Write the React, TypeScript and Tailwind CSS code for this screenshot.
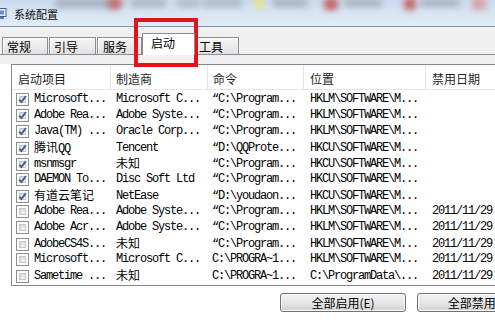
import type { ReactNode } from "react";

type Row = {
  on: boolean;
  name: string;
  maker: string;
  cmd: string;
  loc: string;
  date?: string;
};

const ROWS: Row[] = [
  { on: true, name: "Microsoft...", maker: "Microsoft C...", cmd: "“C:\\Program...", loc: "HKLM\\SOFTWARE\\M..." },
  { on: true, name: "Adobe Rea...", maker: "Adobe Syste...", cmd: "“C:\\Program...", loc: "HKLM\\SOFTWARE\\M..." },
  { on: true, name: "Java(TM) ...", maker: "Oracle Corp...", cmd: "“C:\\Program...", loc: "HKLM\\SOFTWARE\\M..." },
  { on: true, name: "腾讯QQ", maker: "Tencent", cmd: "“D:\\QQProte...", loc: "HKCU\\SOFTWARE\\M..." },
  { on: true, name: "msnmsgr", maker: "未知", cmd: "“C:\\Program...", loc: "HKCU\\SOFTWARE\\M..." },
  { on: true, name: "DAEMON To...", maker: "Disc Soft Ltd", cmd: "“C:\\Program...", loc: "HKCU\\SOFTWARE\\M..." },
  { on: true, name: "有道云笔记", maker: "NetEase", cmd: "“D:\\youdaon...", loc: "HKCU\\SOFTWARE\\M..." },
  { on: false, name: "Adobe Rea...", maker: "Adobe Syste...", cmd: "“C:\\Program...", loc: "HKLM\\SOFTWARE\\M...", date: "2011/11/29" },
  { on: false, name: "Adobe Acr...", maker: "Adobe Syste...", cmd: "“C:\\Program...", loc: "HKLM\\SOFTWARE\\M...", date: "2011/11/29" },
  { on: false, name: "AdobeCS4S...", maker: "未知", cmd: "“C:\\Program...", loc: "HKLM\\SOFTWARE\\M...", date: "2011/11/29" },
  { on: false, name: "Microsoft...", maker: "Microsoft C...", cmd: "C:\\PROGRA~1...", loc: "HKLM\\SOFTWARE\\M...", date: "2011/11/29" },
  { on: false, name: "Sametime ...", maker: "未知", cmd: "C:\\PROGRA~1...", loc: "C:\\ProgramData\\...", date: "2011/11/29" },
];

const TABS = [
  { label: "常规", cls: "ml-[2px] w-[46px] pl-[4px]" },
  { label: "引导", cls: "ml-[1px] w-[47px] pl-[4px]" },
  { label: "服务", cls: "ml-[1px] w-[45px] pl-[5px]" },
  { label: "启动", cls: "w-[53px] pl-[8px]", active: true },
  { label: "工具", cls: "w-[44px] pl-[3px]" },
];

// SimSun-like cells: latin in a 6px-advance mono, CJK runs at full 12px
function Txt({ s }: { s: string }) {
  const parts = s.split(/([\u3400-\u9fff]+)/);
  return (
    <>
      {parts.map((p, i) =>
        i % 2 === 1 ? (
          <span key={i} className="font-['Noto_Sans_CJK_SC',sans-serif] text-[12px] tracking-normal">
            {p}
          </span>
        ) : (
          <span key={i}>{p}</span>
        )
      )}
    </>
  );
}

function CheckBox({ checked }: { checked: boolean }) {
  return (
    <div className="relative h-[13px] w-[13px] shrink-0 border border-[#8e8f8f] bg-white p-[2px]">
      <div className="h-full w-full border border-[#c4c6ca] bg-linear-to-br from-[#d5d7db] to-[#f6f6f6]" />
      {checked && (
        <svg viewBox="0 0 11 11" className="absolute left-0 top-0 h-[11px] w-[11px]">
          <path d="M2.2 5.6 L4.4 8 L8.9 2.2" fill="none" stroke="#4b5c9c" strokeWidth="1.9" />
        </svg>
      )}
    </div>
  );
}

function TitleBar() {
  return (
    <div className="relative h-[27px] overflow-hidden border-b border-[#8494a8] bg-linear-to-b from-[#c9dbee] via-[#d8e5f3] to-[#e2ebf6]">
      <div className="absolute left-[55px] top-[-2px] h-[10px] w-[60px] rounded bg-[#a9b3c2] blur-[3px]" />
      <div className="absolute left-[108px] top-[-2px] h-[11px] w-[14px] rounded bg-[#c46a6a] blur-[3px]" />
      <div className="absolute left-[130px] top-[-1px] h-[8px] w-[36px] rounded bg-[#aab4c3] blur-[3px]" />
      <div className="absolute left-[176px] top-[-1px] h-[8px] w-[24px] rounded bg-[#b0b9c7] blur-[3px]" />
      <div className="absolute left-[202px] top-[-1px] h-[8px] w-[40px] rounded bg-[#acb6c4] blur-[3px]" />
      <div className="absolute left-[254px] top-[-2px] h-[10px] w-[10px] rounded bg-[#ece27e] blur-[3px]" />
      <div className="absolute left-[272px] top-[-1px] h-[8px] w-[36px] rounded bg-[#a9b2c0] blur-[3px]" />
      <div className="absolute left-[324px] top-[-2px] h-[12px] w-[14px] rounded bg-[#c46262] blur-[3px]" />
      <div className="absolute left-[344px] top-[-1px] h-[8px] w-[38px] rounded bg-[#aab3c1] blur-[3px]" />
      <div className="absolute left-[404px] top-[-2px] h-[12px] w-[12px] rounded bg-[#c46464] blur-[3px]" />
      <div className="absolute left-[420px] top-[-1px] h-[8px] w-[40px] rounded bg-[#aab3c1] blur-[3px]" />
      <div className="absolute left-[472px] top-[-2px] h-[12px] w-[14px] rounded bg-[#d9a0a8] blur-[3px]" />
      <div className="relative flex h-full items-center gap-[7px] pt-[1px]">
        <svg viewBox="0 0 7 11" className="h-[11px] w-[7px] shrink-0">
          <rect x="-4" y="0.5" width="10" height="8" fill="#e8f1fb" stroke="#3e5f8f" />
          <rect x="-2" y="2.5" width="6" height="4" fill="#5e8fd0" />
          <rect x="0" y="9" width="4" height="2" fill="#6a7d95" />
        </svg>
        <span className="font-['Noto_Sans_CJK_SC',sans-serif] text-[11px] leading-[14px] text-[#101010]">
          系统配置
        </span>
      </div>
    </div>
  );
}

function TabStrip() {
  return (
    <div className="flex h-[28px] items-end border-b border-[#898c95] font-['Noto_Sans_CJK_SC',sans-serif] text-[12px] text-black">
      {TABS.map((t) =>
        t.active ? (
          <div
            key={t.label}
            className={`relative z-10 -mb-px flex h-[22px] items-start border border-b-0 border-[#898c95] bg-white pt-[1px] leading-[16px] ${t.cls}`}
          >
            {t.label}
          </div>
        ) : (
          <div
            key={t.label}
            className={`flex h-[17px] items-center border border-b-0 border-[#898c95] bg-linear-to-b from-[#f5f5f5] to-[#e1e1e1] pt-[1px] leading-[14px] shadow-[inset_1px_1px_0_#ffffff] ${t.cls}`}
          >
            {t.label}
          </div>
        )
      )}
    </div>
  );
}

function HeaderCell({ children, cls }: { children: ReactNode; cls: string }) {
  return <div className={`h-full border-r border-[#e3e5e8] pt-[6px] leading-[16px] ${cls}`}>{children}</div>;
}

function StartupList() {
  return (
    <div className="ml-[11px] mt-[9px] h-[222px] w-[500px] border border-[#828790] bg-white">
      <div className="grid h-[25px] grid-cols-[99px_97px_96px_122px_1fr] border-b border-[#e5e5e5] font-['Noto_Sans_CJK_SC',sans-serif] text-[12px] text-[#1e1e1e]">
        <HeaderCell cls="pl-[6px]">启动项目</HeaderCell>
        <HeaderCell cls="pl-[5px]">制造商</HeaderCell>
        <HeaderCell cls="pl-[5px]">命令</HeaderCell>
        <HeaderCell cls="pl-[6px]">位置</HeaderCell>
        <div className="pl-[6px] pt-[6px] leading-[16px]">禁用日期</div>
      </div>
      <div className="pt-[1px] font-['Liberation_Mono','Noto_Sans_CJK_SC',monospace] text-[12px] tracking-[-1.2px] text-black">
        {ROWS.map((r, i) => (
          <div key={i} className="grid h-[16px] grid-cols-[99px_97px_96px_122px_1fr] items-center leading-[16px] whitespace-nowrap">
            <div className="flex items-center gap-[5px] pl-[4px]">
              <CheckBox checked={r.on} />
              <span>
                <Txt s={r.name} />
              </span>
            </div>
            <div className="pl-[5px]">
              <Txt s={r.maker} />
            </div>
            <div className="pl-[4px]">{r.cmd}</div>
            <div className="pl-[6px]">{r.loc}</div>
            <div className="pl-[6px]">{r.date ?? ""}</div>
          </div>
        ))}
      </div>
    </div>
  );
}

function WinButton({ children }: { children: ReactNode }) {
  return (
    <button
      type="button"
      className="h-[19px] w-[126px] shrink-0 rounded-[3px] border border-[#707070] bg-linear-to-b from-[#f3f3f3] via-[#e6e6e6] to-[#d2d2d2] font-['Noto_Sans_CJK_SC',sans-serif] text-[12px] leading-[15px] text-black shadow-[inset_0_0_0_1px_#fbfbfb]"
    >
      {children}
    </button>
  );
}

export default function App() {
  return (
    <div className="relative h-[328px] w-[495px] overflow-hidden bg-[#f0f0f0]">
      <TitleBar />
      <TabStrip />
      <div className="h-[265px] border-b border-[#a0a0a0] bg-white">
        <StartupList />
        <div className="ml-[280px] mt-[7px] flex gap-[11px]">
          <WinButton>全部启用(E)</WinButton>
          <WinButton>全部禁用(D)</WinButton>
        </div>
      </div>
      <div className="pointer-events-none absolute left-[134px] top-[18px] h-[49px] w-[64px] border-[4px] border-[#e3131b]" />
    </div>
  );
}
